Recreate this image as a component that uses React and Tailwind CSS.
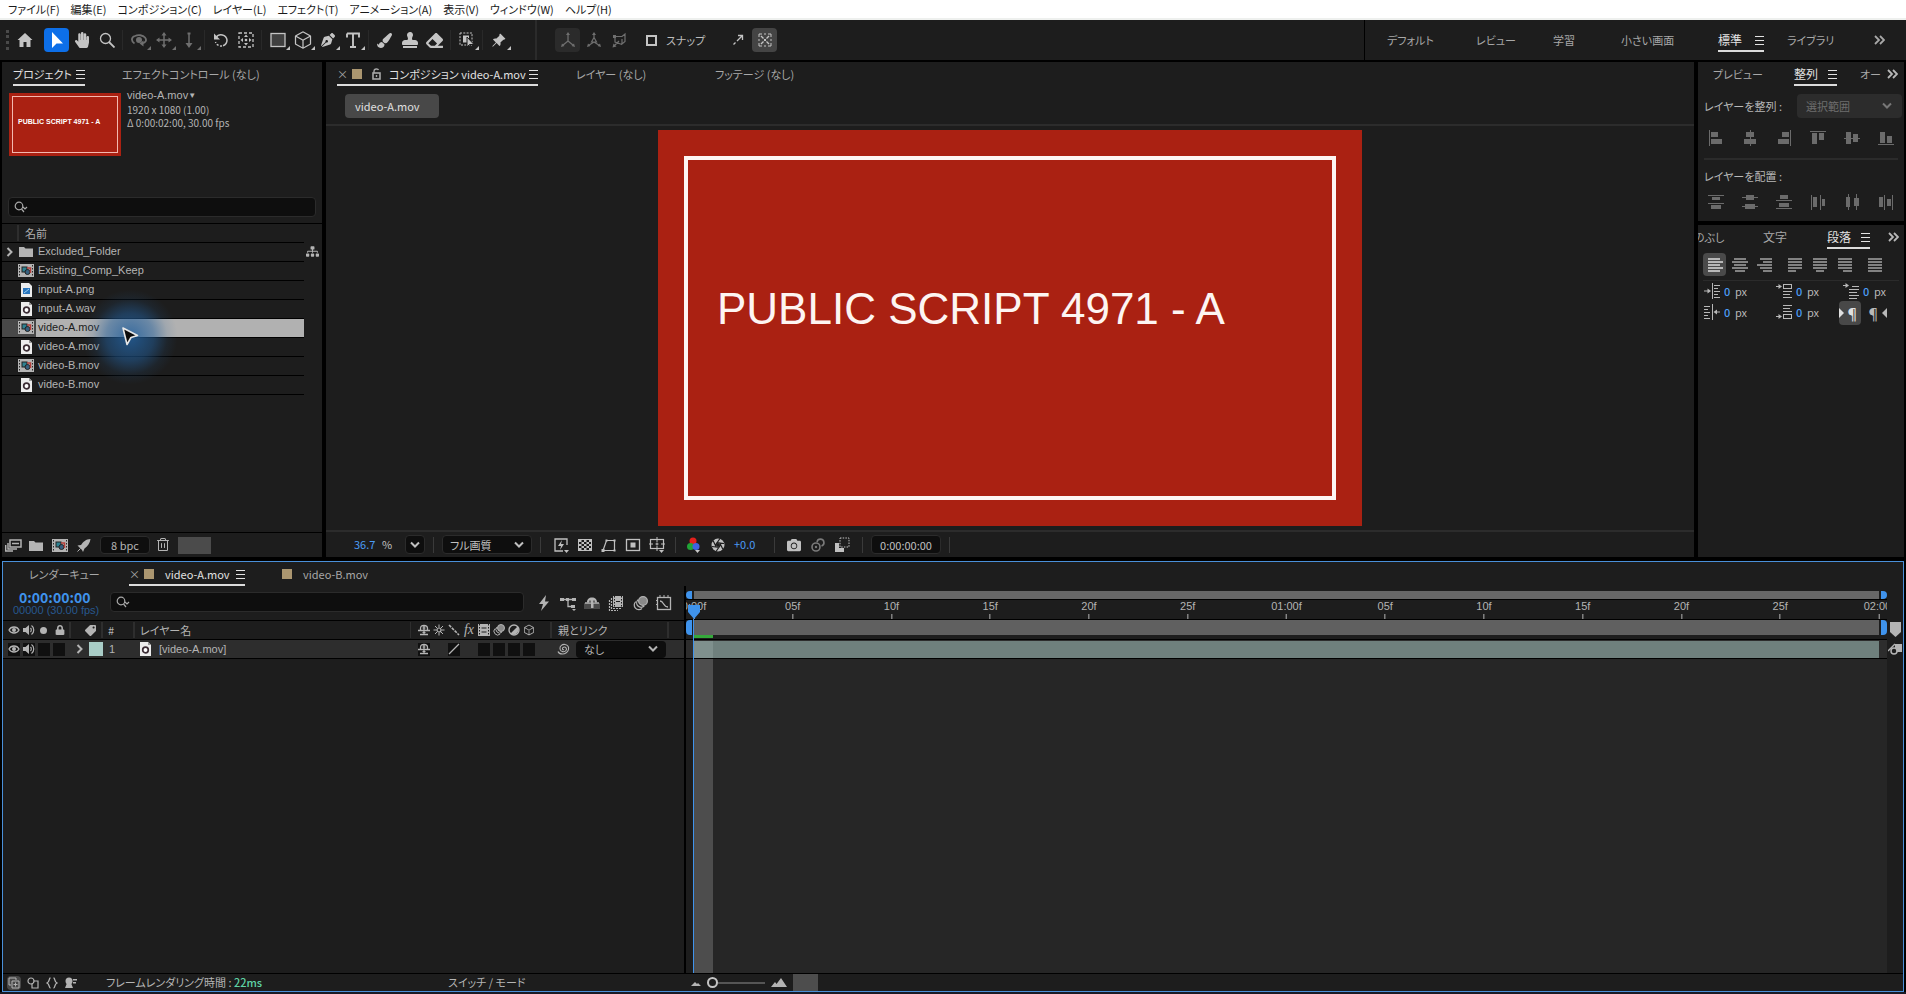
// src/App.jsx
import React, { useState } from 'react'
import clsx from 'clsx'
import { FaHandPaper, FaPenNib, FaPaintBrush, FaStamp, FaEraser, FaLock, FaTag, FaCamera, FaSitemap } from 'react-icons/fa'
import { BsPinAngleFill } from 'react-icons/bs'
import { PiTrash, PiCube } from 'react-icons/pi'

const menus = [
  'ファイル(F)',
  '編集(E)',
  'コンポジション(C)',
  'レイヤー(L)',
  'エフェクト(T)',
  'アニメーション(A)',
  '表示(V)',
  'ウィンドウ(W)',
  'ヘルプ(H)',
]

const projectItems = [
  { id: 1, name: 'Excluded_Folder', type: 'folder' },
  { id: 2, name: 'Existing_Comp_Keep', type: 'comp' },
  { id: 3, name: 'input-A.png', type: 'image' },
  { id: 4, name: 'input-A.wav', type: 'media' },
  { id: 5, name: 'video-A.mov', type: 'comp' },
  { id: 6, name: 'video-A.mov', type: 'media' },
  { id: 7, name: 'video-B.mov', type: 'comp' },
  { id: 8, name: 'video-B.mov', type: 'media' },
]

const rulerLabels = ['0:00f', '05f', '10f', '15f', '20f', '25f', '01:00f', '05f', '10f', '15f', '20f', '25f', '02:00f']

/* ── Icons */
const Svg = ({ size = 16, w, h, className, children }) => (
  <svg
    width={w || size}
    height={h || size}
    viewBox={`0 0 ${w || size} ${h || size}`}
    fill="none"
    stroke="currentColor"
    className={clsx('shrink-0', className)}
    aria-hidden="true"
  >
    {children}
  </svg>
)

const Burger = () => (
  <Svg size={9}>
    <path d="M0 0.500h9M0 4.500h9M0 8.500h9" />
  </Svg>
)

const Chevron = ({ className }) => (
  <Svg w={10} h={8} className={className}>
    <path d="M1 1.500l4 4 4-4" strokeWidth="2" />
  </Svg>
)

const ChevronRight = () => (
  <Svg w={7} h={10}>
    <path d="M1.500 1l4 4-4 4" strokeWidth="2" />
  </Svg>
)

const DoubleChevron = () => (
  <Svg w={11} h={10}>
    <path d="M1 1l4 4-4 4M6 1l4 4-4 4" strokeWidth="1.800" />
  </Svg>
)

const SearchIcon = () => (
  <Svg w={14} h={12}>
    <circle cx="5" cy="5" r="3.800" strokeWidth="1.200" />
    <path d="M7.500 8l2.500 3M9 6l2 2 2-2" strokeWidth="1.200" />
  </Svg>
)

const UnlockIcon = ({ className }) => (
  <Svg w={9} h={12} className={className}>
    <rect x="1" y="5" width="7" height="6" strokeWidth="1.600" />
    <path d="M2 5V3c0-2.500 4-2.500 4.500-1M4.500 7v2" strokeWidth="1.400" />
  </Svg>
)

const HomeIcon = () => (
  <Svg>
    <path d="M8 1L0.500 8h2v7h4V10h3v5h4V8h2z" fill="currentColor" stroke="none" />
  </Svg>
)

const ArrowIcon = () => (
  <Svg>
    <path d="M3 0v16l4.500-4.500H14z" fill="currentColor" stroke="none" />
  </Svg>
)

const ZoomIcon = () => (
  <Svg>
    <circle cx="6.500" cy="6.500" r="5" strokeWidth="1.300" />
    <path d="M10 10l5.500 5.500" strokeWidth="1.800" />
  </Svg>
)

const OrbitIcon = () => (
  <Svg>
    <circle cx="8" cy="8" r="3" fill="currentColor" stroke="none" />
    <path d="M3.500 11.500C0 9.500 0 5 4 4c3-1.500 8-1 10 1.500s1 5-3 6" strokeWidth="1.800" />
    <path d="M12.500 8.500v6l-4-3z" fill="currentColor" stroke="none" />
  </Svg>
)

const PanIcon = () => (
  <Svg>
    <path d="M8 2v12M2 8h12" strokeWidth="1.500" />
    <path d="M8 0l2.500 3.500h-5zM8 16l2.500-3.500h-5zM0 8l3.500 2.500v-5zM16 8l-3.500 2.500v-5z" fill="currentColor" stroke="none" />
  </Svg>
)

const DollyIcon = () => (
  <Svg>
    <path d="M8 1v11" strokeWidth="1.500" />
    <path d="M8 16l3.500-5h-7z" fill="currentColor" stroke="none" />
    <path d="M6.500 1.500h3" strokeWidth="2" />
  </Svg>
)

const RotateIcon = () => (
  <Svg>
    <path d="M3 5.500A6 6 0 0 1 14 8a6 6 0 0 1-4 5.700" strokeWidth="1.500" />
    <path d="M9 14a6 6 0 0 1-6.500-4" strokeWidth="1.500" strokeDasharray="2 1.500" />
    <path d="M1 1.500v6h6z" fill="currentColor" stroke="none" />
  </Svg>
)

const AnchorIcon = () => (
  <Svg>
    <rect x="1" y="1" width="14" height="14" strokeDasharray="3 2" strokeWidth="1.300" />
    <circle cx="8" cy="8" r="1.300" fill="currentColor" stroke="none" />
    <path d="M8 2.500l2 2.500H6zM8 13.500L10 11H6zM2.500 8L5 10V6zM13.500 8L11 10V6z" fill="currentColor" stroke="none" />
  </Svg>
)

const RectIcon = () => (
  <Svg>
    <rect x="1" y="1.500" width="14" height="13" fill="#404040" strokeWidth="1.300" />
  </Svg>
)

const TypeIcon = () => (
  <Svg>
    <path d="M2 1.500h12v4M2 5.500v-4M8 1v14M5 15h6" strokeWidth="1.900" />
  </Svg>
)

const RotoIcon = () => (
  <Svg>
    <rect x="1" y="1" width="12" height="12" strokeDasharray="2 1.300" />
    <rect x="4" y="3.500" width="6" height="7" fill="currentColor" stroke="none" />
    <path d="M8 5v10l2.500-2.500H15z" fill="currentColor" stroke="#1d1d1d" />
  </Svg>
)

const AxisIcon = () => (
  <Svg>
    <path d="M8 2v7M8 9l-5.500 4.500M8 9l5.500 4.500" strokeWidth="1.300" />
    <path d="M8 0l2 3H6zM1 15l1-3.500 2.500 2.500zM15 15l-1-3.500-2.500 2.500z" fill="currentColor" stroke="none" />
  </Svg>
)

const AxisWorldIcon = () => (
  <Svg>
    <path d="M8 2v4M8 10l-5.500 3.500M8 10l5.500 3.500M5.500 10L8 5.500l2.500 4.500z" strokeWidth="1.200" />
    <path d="M8 0l2 3H6zM1 15l1-3.500 2.500 2.500zM15 15l-1-3.500-2.500 2.500z" fill="currentColor" stroke="none" />
  </Svg>
)

const AxisViewIcon = () => (
  <Svg>
    <path d="M3 4.500h7l3-2.500v7.500L10 12V7M3 4.500V10l7 2.500M2 14l5-5" strokeWidth="1.200" />
    <path d="M0.500 15.500l1-4 3 3zM1 3h3v3H1z" fill="currentColor" stroke="none" />
  </Svg>
)

const SnapArrowIcon = () => (
  <Svg size={12}>
    <path d="M5 7l5-5M6 1.500h4.500V6" strokeWidth="1.300" />
    <path d="M1.500 10.500l2-2" strokeWidth="1.300" />
  </Svg>
)

const SnapGridIcon = () => (
  <Svg>
    <path d="M2 5V2h3M11 2h3v3M14 11v3h-3M5 14H2v-3M7 2h2M7 14h2M2 7v2M14 7v2" />
    <path d="M4 4l2.500 2.500M12 4L9.500 6.500M4 12l2.500-2.500M12 12L9.500 9.500" strokeWidth="1.400" />
    <rect x="7" y="7" width="2" height="2" fill="currentColor" stroke="none" />
  </Svg>
)

const FolderIcon = () => (
  <Svg w={14} h={11}>
    <path d="M0 1h5l1.500 1.500H14V11H0z" fill="currentColor" stroke="none" />
  </Svg>
)

const CompIcon = () => (
  <Svg w={16} h={13}>
    <rect width="16" height="13" fill="#b4b4b4" stroke="none" />
    <path d="M1.500 1v11M14.500 1v11" stroke="#2a2a2a" strokeDasharray="1.500 1.500" />
    <rect x="4" y="3" width="5" height="5" fill="#2f8292" stroke="#222" />
    <circle cx="9.500" cy="8" r="2.500" fill="#35607f" stroke="#222" />
    <path d="M9 4h3.500v5" stroke="#b3403c" strokeWidth="1.500" />
  </Svg>
)

const MediaIcon = () => (
  <Svg w={11} h={14}>
    <path d="M0 0h8l3 3v11H0z" fill="#ececec" stroke="none" />
    <path d="M8 0v3h3" fill="#999" stroke="none" />
    <circle cx="5.500" cy="8" r="2.800" fill="#fff" stroke="#3c2d35" strokeWidth="1.700" />
  </Svg>
)

const ImageIcon = () => (
  <Svg w={11} h={14}>
    <path d="M0 0h8l3 3v11H0z" fill="#ececec" stroke="none" />
    <rect x="2" y="5" width="7" height="6" fill="#2b76bd" stroke="none" />
    <path d="M3 10l5-4" stroke="#9ad0f5" />
  </Svg>
)

const itemIcons = {
  folder: <FolderIcon />,
  comp: <CompIcon />,
  image: <ImageIcon />,
  media: <MediaIcon />,
}

const InterpretIcon = () => (
  <Svg w={17} h={13}>
    <rect x="5" y="1" width="11" height="7" strokeWidth="1.500" />
    <path d="M7 4.500h7M3 4v6h9M0.700 6v6H8" strokeWidth="1.400" />
  </Svg>
)

const RocketIcon = () => (
  <Svg w={14} h={13}>
    <path d="M13.500 0C9 0 6 3 4 6L0.500 6.500 3 9l2 2 1 2 1.500-3.500C11 7 13 4 13.500 0z" fill="currentColor" stroke="none" />
    <path d="M3.500 9.500L0.500 12.500" />
  </Svg>
)

const PreviewFastIcon = () => (
  <Svg>
    <path d="M10 14H2V2h12v6" strokeWidth="1.300" />
    <path d="M9 3L5 9h3l-1 4 4-6H8z" fill="currentColor" stroke="none" />
    <path d="M11 13h5l-2.500 3z" fill="currentColor" stroke="none" />
  </Svg>
)

const CheckerIcon = () => (
  <Svg>
    <rect x="1.500" y="2.500" width="13" height="11" />
    <path d="M2 4h12M2 8h12M2 12h12" strokeDasharray="2.500 2.500" strokeWidth="2.200" />
    <path d="M4.500 6h10M4.500 10h10" strokeDasharray="2.500 2.500" strokeWidth="2" />
  </Svg>
)

const MaskIcon = () => (
  <Svg>
    <path d="M2 13.500L5.500 3.500h8v10z" strokeWidth="1.200" />
    <path d="M0.500 12h3v3h-3zM4.500 2.500h2v2h-2zM12.500 2.500h2v2h-2zM12.500 12.500h2v2h-2z" fill="currentColor" stroke="none" />
  </Svg>
)

const RegionIcon = () => (
  <Svg>
    <rect x="1.500" y="2.500" width="13" height="11" strokeWidth="1.300" />
    <rect x="5.500" y="5.500" width="5" height="5" fill="currentColor" stroke="none" />
  </Svg>
)

const GuidesIcon = () => (
  <Svg>
    <rect x="1.500" y="2.500" width="13" height="9" strokeWidth="1.200" />
    <path d="M8 0v5M8 9v5M0 7h4M12 7h4M6.500 7h3M8 5.500v3" />
    <path d="M10 13h5l-2.500 3z" fill="currentColor" stroke="none" />
  </Svg>
)

const ChannelsIcon = () => (
  <Svg>
    <circle cx="7" cy="4" r="3.500" fill="#e3201c" stroke="none" />
    <circle cx="4.500" cy="9.500" r="3.500" fill="#21a336" stroke="none" />
    <circle cx="10" cy="9.500" r="3.500" fill="#3f63e0" stroke="none" />
    <path d="M9 13h5l-2.500 3z" fill="#c8c8c8" stroke="none" />
  </Svg>
)

const ShutterIcon = () => (
  <Svg size={14}>
    <circle cx="7" cy="7" r="6.500" fill="currentColor" stroke="none" />
    <path d="M4.500 7L9 0.500M5.500 4.500l7.500 1M8.500 4.500l3.500 7M9.500 7L5 13.500M8.500 9.500L1 8.500M5.500 9.500L2 2.500" stroke="#1d1d1d" strokeWidth="1.200" />
    <circle cx="7" cy="7" r="2" fill="#1d1d1d" stroke="none" />
  </Svg>
)

const ShowSnapIcon = () => (
  <Svg className="text-[#7a7a7a]">
    <circle cx="6" cy="10" r="4" strokeWidth="1.600" />
    <circle cx="6" cy="10" r="1.200" fill="currentColor" stroke="none" />
    <path d="M7 5a3.500 3.500 0 1 1 4.500 4" strokeWidth="1.600" />
  </Svg>
)

const DraftIcon = () => (
  <Svg>
    <path d="M1 6h4v5h5v4H1z" fill="currentColor" stroke="none" />
    <rect x="6" y="1" width="9" height="9" strokeDasharray="1.500 1.200" />
  </Svg>
)

/* bars given as [x, y, w, h] on a 16px grid */
const Bars = ({ bars }) => (
  <Svg>
    {bars.map((b, i) => (
      <rect key={i} x={b[0]} y={b[1]} width={b[2]} height={b[3]} fill="currentColor" stroke="none" />
    ))}
  </Svg>
)

const alignIcons = [
  { label: '左揃え', bars: [[1, 0, 1, 16], [3, 2, 7, 5], [3, 9, 11, 5]] },
  { label: '水平中央', bars: [[8, 0, 1, 16], [4, 2, 8, 5], [2, 9, 12, 5]] },
  { label: '右揃え', bars: [[14, 0, 1, 16], [6, 2, 7, 5], [2, 9, 11, 5]] },
  { label: '上揃え', bars: [[0, 1, 16, 1], [2, 3, 5, 11], [9, 3, 5, 7]] },
  { label: '垂直中央', bars: [[0, 8, 16, 1], [2, 2, 5, 12], [9, 4, 5, 8]] },
  { label: '下揃え', bars: [[0, 14, 16, 1], [2, 2, 5, 11], [9, 6, 5, 7]] },
]

const distributeIcons = [
  { label: '上に配置', bars: [[0, 1, 16, 1], [4, 3, 8, 3], [0, 9, 16, 1], [3, 11, 10, 4]] },
  { label: '中央に配置', bars: [[0, 3, 16, 1], [4, 1, 8, 5], [0, 12, 16, 1], [3, 10, 10, 5]] },
  { label: '下に配置', bars: [[4, 1, 8, 4], [0, 6, 16, 1], [3, 9, 10, 4], [0, 14, 16, 1]] },
  { label: '左に配置', bars: [[1, 1, 1, 15], [3, 3, 4, 10], [10, 1, 1, 15], [12, 5, 3, 7]] },
  { label: '横中央に配置', bars: [[4, 0, 1, 16], [2, 3, 4, 10], [12, 0, 1, 16], [10, 4, 5, 8]] },
  { label: '右に配置', bars: [[1, 3, 4, 10], [6, 1, 1, 15], [9, 5, 4, 7], [14, 1, 1, 15]] },
]

const ParagraphIcon = ({ rows }) => (
  <Svg>
    {rows.map((r, i) => (
      <rect key={i} x={r[0]} y={1 + i * 3} width={r[1]} height={2} fill="currentColor" stroke="none" />
    ))}
  </Svg>
)

const justify = [
  { label: '左', rows: [[1, 12], [1, 15], [1, 12], [1, 15], [1, 12]] },
  { label: '中央', rows: [[2, 12], [0, 16], [2, 12], [0, 16], [3, 10]] },
  { label: '右', rows: [[3, 12], [6, 9], [0, 15], [3, 12], [6, 9]] },
  { label: '均等左', rows: [[1, 14], [1, 14], [1, 14], [1, 14], [1, 8]] },
  { label: '均等中央', rows: [[1, 14], [1, 14], [1, 14], [1, 14], [4, 8]] },
  { label: '均等右', rows: [[1, 14], [1, 14], [1, 14], [1, 14], [6, 9]] },
  { label: '両端', rows: [[1, 14], [1, 14], [1, 14], [1, 14], [1, 14]] },
]

const IndentLeft = () => (
  <Svg>
    <path d="M8.500 0v16M10 2.500h6M10 5.500h4M10 8.500h6M10 11.500h4M10 14.500h6M0 8h5" />
    <path d="M3.500 5.500L7 8l-3.500 2.500z" fill="currentColor" stroke="none" />
  </Svg>
)

const IndentRight = () => (
  <Svg>
    <path d="M8.500 0v16M0 2.500h6M0 5.500h4M0 8.500h6M0 11.500h4M0 14.500h6M11 8h5" />
    <path d="M13 5.500L9.500 8l3.500 2.500z" fill="currentColor" stroke="none" />
  </Svg>
)

const SpaceBefore = () => (
  <Svg>
    <rect x="7.500" y="1.500" width="8" height="4" />
    <path d="M7 8.500h9M7 11.500h7M7 14.500h9M0 3.500h3" />
    <path d="M2.500 1L6 3.500 2.500 6z" fill="currentColor" stroke="none" />
  </Svg>
)

const SpaceAfter = () => (
  <Svg>
    <rect x="7.500" y="10.500" width="8" height="4" />
    <path d="M7 1.500h9M7 4.500h7M7 7.500h9M0 12.500h3" />
    <path d="M2.500 10L6 12.500 2.500 15z" fill="currentColor" stroke="none" />
  </Svg>
)

const FirstLine = () => (
  <Svg>
    <path d="M9 3.500h7M6 6.500h10M6 9.500h8M6 12.500h10M6 15.500h8M0 2.500h3" />
    <path d="M2.500 0L6 2.500 2.500 5z" fill="currentColor" stroke="none" />
  </Svg>
)

const EyeIcon = () => (
  <Svg w={12} h={10}>
    <path d="M1 5c2-4 8-4 10 0-2 4-8 4-10 0z" strokeWidth="1.300" />
    <circle cx="6" cy="5" r="2" fill="currentColor" stroke="none" />
  </Svg>
)

const SpeakerIcon = () => (
  <Svg w={12} h={12}>
    <path d="M0 4h2.500L6 1v10L2.500 8H0z" fill="currentColor" stroke="none" />
    <path d="M7.500 4c1 1 1 3 0 4M8.500 1.500c3 2 3 7 0 9" strokeWidth="1.200" />
  </Svg>
)

const ShyIcon = () => (
  <Svg w={12} h={12}>
    <path d="M2.500 6V4.500C2.500 2 4 1.500 6 1.500s3.500 0.500 3.500 3V6M0 6.500h12M6 1v10M2 10.500h8" strokeWidth="1.300" />
    <path d="M4.500 4h3M4.500 8.500h3" />
  </Svg>
)

const SunIcon = () => (
  <Svg w={12} h={12}>
    <circle cx="6" cy="6" r="2" strokeWidth="1.200" />
    <path d="M6 0.500v3M6 8.500v3M0.500 6h3M8.500 6h3M2 2l2 2M8 8l2 2M10 2L8 4M4 8l-2 2" />
  </Svg>
)

const BackslashIcon = () => (
  <Svg w={12} h={12}>
    <path d="M1 1l10 10" strokeDasharray="3 1" strokeWidth="1.600" />
  </Svg>
)

const FilmIcon = () => (
  <Svg w={12} h={12}>
    <rect width="12" height="12" fill="currentColor" stroke="none" />
    <path d="M1.500 0v12M10.500 0v12" stroke="#1d1d1d" strokeDasharray="1.500 1.500" />
    <path d="M3.500 4h5M3.500 8h5" stroke="#1d1d1d" />
  </Svg>
)

const BlurIcon = ({ size = 12 }) => (
  <svg width={size} height={size} viewBox="0 0 12 12" fill="none" stroke="currentColor" aria-hidden="true">
    <circle cx="8" cy="4" r="3.500" fill="#8a8a8a" />
    <path d="M4 3a3.500 3.500 0 1 0 5 5M2.200 4.500a3.300 3.300 0 1 0 5 5.500" />
  </svg>
)

const AdjustIcon = () => (
  <Svg w={12} h={12}>
    <circle cx="6" cy="6" r="5" strokeWidth="1.400" />
    <path d="M9.500 2.500a5 5 0 0 1-7 7z" fill="currentColor" stroke="none" />
  </Svg>
)

const SpiralIcon = () => (
  <Svg w={13} h={12}>
    <path d="M7 6.500c-1.500 1-2.500-1.500-0.500-2.300s4 1.300 2.500 3.300-5.500 1.500-6-1.500S5.500 1 8 1.500s4 2.500 3.500 5S8 11 5.500 11 1.500 10 1 8.500" strokeWidth="1.100" />
  </Svg>
)

const FlowIcon = () => (
  <Svg>
    <path d="M1 4.500h14M8 4.500v7h6" strokeWidth="1.300" />
    <path d="M0 3h4v3H0zM6 3h3v3H6zM12 3h4v3h-4zM11 10h4v3h-4z" fill="currentColor" stroke="none" />
    <path d="M12 14h4l-2 2z" fill="currentColor" stroke="none" />
  </Svg>
)

const ShyBigIcon = () => (
  <Svg>
    <path d="M0 8h16v6H0z" fill="#4a4a4a" stroke="none" />
    <path d="M3 7.500C3 4 5 2.500 8 2.500s5 1.500 5 5zM7 7h2.500v6H7z" fill="currentColor" stroke="none" />
    <path d="M1 8h14" strokeWidth="1.500" />
    <path d="M6 5.500v2M10 5.500v2" stroke="#1d1d1d" />
  </Svg>
)

const FrameBlendIcon = () => (
  <Svg>
    <rect x="5" y="1" width="10" height="11" fill="currentColor" stroke="none" />
    <path d="M6.500 1v11M13.500 1v11" stroke="#1d1d1d" strokeDasharray="1.500 1.500" />
    <path d="M8 6.500h4" stroke="#1d1d1d" />
    <path d="M3.500 3v10.500H13M1.500 5v10.500H10" strokeDasharray="2 1" strokeWidth="1.200" />
  </Svg>
)

const GraphIcon = () => (
  <Svg>
    <rect x="1.500" y="2.500" width="13" height="12" strokeWidth="1.300" />
    <path d="M4 6c4 0 3 6 8 6" strokeWidth="1.300" />
    <path d="M4 0v3M8 0v3M12 0v3M0 5.500h2M0 9.500h2" />
  </Svg>
)

const BoltIcon = () => (
  <Svg>
    <path d="M10 0L3 9h4l-2 7 8-9.500H9z" fill="currentColor" stroke="none" />
  </Svg>
)

/* ── Small shared parts */
const ToolButton = ({ label, active, dim, corner, onClick, children }) => (
  <button
    type="button"
    aria-label={label}
    onClick={onClick}
    className={clsx(
      'relative flex h-6 w-[25px] items-center justify-center rounded',
      active ? 'bg-[#0d6fe8] text-white' : dim ? 'text-[#6f6f6f]' : 'text-[#c4c4c4]',
    )}
  >
    {children}
    {corner && <span className="absolute bottom-[2px] right-0 border-b-4 border-l-4 border-b-current border-l-transparent" />}
  </button>
)

const ToolSep = () => <span className="mx-[3px] h-5 w-px bg-[#292929]" />

const Sep = ({ className }) => <span className={clsx('h-4 w-px bg-[#3a3a3a]', className)} />

const Tab = ({ active, className, children }) => (
  <button
    type="button"
    className={clsx(
      'flex h-6 shrink-0 items-center whitespace-nowrap border-b-2 pt-[2px]',
      active ? 'border-[#dcdcdc] text-[#e2e2e2]' : 'border-transparent text-[#a8a8a8]',
      className,
    )}
  >
    {children}
  </button>
)

const IconButton = ({ label, className, children }) => (
  <button type="button" aria-label={label} className={clsx('flex h-5 items-center justify-center', className || 'w-6')}>
    {children}
  </button>
)

const SearchBox = ({ label, className }) => (
  <div className={clsx('relative', className)}>
    <span className="absolute left-[6px] top-1/2 -translate-y-1/2 text-[#a9a9a9]">
      <SearchIcon />
    </span>
    <input
      type="text"
      aria-label={label}
      className="block h-5 w-full rounded border border-[#2b2b2b] bg-[#0e0e0e] pl-6 text-[11px] focus:outline-none"
    />
  </div>
)

const Select = ({ label, value, className, selectClass }) => (
  <div className={clsx('relative', className)}>
    <select aria-label={label} className={clsx('block w-full appearance-none rounded border pl-[7px] text-[11px]', selectClass)}>
      <option>{value}</option>
    </select>
    <Chevron className="pointer-events-none absolute right-2 top-1/2 -translate-y-1/2" />
  </div>
)

const Swatch = () => <span className="h-[10px] w-[10px] shrink-0 bg-[#ab9670]" />

/* ── Menu bar */
const MenuBar = () => (
  <nav className="flex h-5 items-center gap-[11px] border-b-2 border-[#eef0ee] bg-white pl-2 text-[11px] leading-4 text-[#1a1a1a]">
    {menus.map((m) => (
      <button key={m} type="button" className="whitespace-nowrap">
        {m}
      </button>
    ))}
  </nav>
)

/* ── Toolbar */
const Toolbar = () => {
  const [tool, setTool] = useState('select')
  const [snap, setSnap] = useState(false)

  const groups = [
    [
      { key: 'select', icon: <ArrowIcon /> },
      { key: 'hand', icon: <FaHandPaper size={16} /> },
      { key: 'zoom', icon: <ZoomIcon /> },
    ],
    [
      { key: 'orbit', icon: <OrbitIcon />, dim: true, corner: true },
      { key: 'pan', icon: <PanIcon />, dim: true, corner: true },
      { key: 'dolly', icon: <DollyIcon />, dim: true, corner: true },
    ],
    [
      { key: 'rotate', icon: <RotateIcon /> },
      { key: 'anchor', icon: <AnchorIcon /> },
    ],
    [
      { key: 'rect', icon: <RectIcon />, corner: true },
      { key: 'cube', icon: <PiCube size={20} />, corner: true },
      { key: 'pen', icon: <FaPenNib size={14} />, corner: true },
      { key: 'type', icon: <TypeIcon />, corner: true },
    ],
    [
      { key: 'brush', icon: <FaPaintBrush size={15} /> },
      { key: 'stamp', icon: <FaStamp size={16} /> },
      { key: 'eraser', icon: <FaEraser size={17} /> },
    ],
    [{ key: 'roto', icon: <RotoIcon />, corner: true }],
    [{ key: 'pin', icon: <BsPinAngleFill size={15} />, corner: true }],
  ]

  return (
    <header className="flex h-10 items-center bg-[#1d1d1d] text-[11px] text-[#a8a8a8]">
      <div className="flex flex-1 items-center self-stretch">
        <span className="ml-[6px] h-5 border-l-[3px] border-dotted border-[#4a4a4a]" />
        <span className="ml-[3px]">
          <ToolButton label="ホーム">
            <HomeIcon />
          </ToolButton>
        </span>
        <span className="ml-[7px] flex items-center">
          {groups.map((g, i) => (
            <React.Fragment key={i}>
              {i > 0 && <ToolSep />}
              {g.map((t) => (
                <ToolButton
                  key={t.key}
                  label={t.key}
                  active={tool === t.key}
                  dim={t.dim}
                  corner={t.corner}
                  onClick={() => setTool(t.key)}
                >
                  {t.icon}
                </ToolButton>
              ))}
            </React.Fragment>
          ))}
        </span>
        <span className="ml-6 w-[2px] self-stretch bg-[#2b2b2b]" />
        <div className="ml-[18px] flex items-center gap-[1px]">
          <span className="rounded bg-[#2b2b2b]">
            <ToolButton label="ローカル軸" dim>
              <AxisIcon />
            </ToolButton>
          </span>
          <ToolButton label="ワールド軸" dim>
            <AxisWorldIcon />
          </ToolButton>
          <ToolButton label="ビュー軸" dim>
            <AxisViewIcon />
          </ToolButton>
        </div>
        <label className="ml-[14px] flex items-center gap-[9px] whitespace-nowrap text-[#bdbdbd]">
          <input
            type="checkbox"
            checked={snap}
            onChange={(e) => setSnap(e.target.checked)}
            className="h-[11px] w-[11px] appearance-none border-2 border-[#c4c4c4] checked:bg-[#c4c4c4]"
          />
          スナップ
        </label>
        <div className="ml-5 flex items-center gap-[2px]">
          <ToolButton label="スナップ延長">
            <SnapArrowIcon />
          </ToolButton>
          <span className="rounded bg-[#444]">
            <ToolButton label="スナップ表示">
              <SnapGridIcon />
            </ToolButton>
          </span>
        </div>
      </div>

      {/* ── Workspaces */}
      <div className="flex w-[542px] items-center self-stretch border-l border-black pl-[22px]">
        <button type="button" className="w-[89px] text-left">デフォルト</button>
        <button type="button" className="w-[77px] text-left">レビュー</button>
        <button type="button" className="w-[68px] text-left">学習</button>
        <button type="button" className="w-[97px] text-left text-[11px]">小さい画面</button>
        <Tab active className="w-[46px] justify-between text-xs">
          標準 <Burger />
        </Tab>
        <button type="button" className="ml-[23px] w-[84px] text-left">ライブラリ</button>
        <IconButton label="その他" className="w-4">
          <DoubleChevron />
        </IconButton>
      </div>
    </header>
  )
}

/* ── Project panel */
const ProjectPanel = () => {
  const [selected, setSelected] = useState(5)

  return (
    <section className="relative flex w-80 shrink-0 flex-col bg-[#1d1d1d]">
      <div className="flex px-[11px] text-[11px]">
        <Tab active className="w-[72px] justify-between">
          プロジェクト <Burger />
        </Tab>
        <Tab className="ml-[37px]">エフェクトコントロール (なし)</Tab>
      </div>

      <div className="flex h-[111px] gap-[6px] pl-[7px] pt-[7px]">
        <div className="h-[63px] w-28 bg-[#aa2112] p-[3px]">
          <div className="flex h-full items-center border border-[#f3b9b0] pb-1 pl-[5px] font-['Liberation_Sans',sans-serif] text-[7px] font-bold whitespace-nowrap text-white">
            PUBLIC SCRIPT 4971 - A
          </div>
        </div>
        <div className="-mt-1 text-[10px] leading-[13px] text-[#b4b4b4]">
          <p className="flex items-center font-['Liberation_Sans',sans-serif] text-[11px] leading-[13px]">
            video-A.mov<span className="text-[8px]">▼</span>
          </p>
          <p className="mt-px">1920 x 1080 (1.00)</p>
          <p>Δ 0:00:02:00, 30.00 fps</p>
        </div>
      </div>

      <SearchBox label="プロジェクトを検索" className="mx-[6px] mb-[6px]" />

      <div className="relative flex-1 border-t border-black">
        <table className="w-full table-fixed border-collapse text-left">
          <colgroup>
            <col className="w-[34px]" />
            <col />
            <col className="w-[18px]" />
          </colgroup>
          <thead>
            <tr className="text-[11px] text-[#b0b0b0]">
              <th colSpan={2} className="h-[18px] border-b border-black p-0 font-normal leading-4">
                <div className="ml-[15px] border-l-2 border-[#2e2e2e] pl-[6px]">名前</div>
              </th>
              <th className="p-0" />
            </tr>
          </thead>
          <tbody>
            {projectItems.map((it) => (
              <tr
                key={it.id}
                onClick={() => setSelected(it.id)}
                className="font-['Liberation_Sans',sans-serif] text-[11px] leading-4"
              >
                <td className={clsx('h-[19px] border-b border-black p-0', selected === it.id && 'bg-[#484848]')}>
                  <div className="flex h-4 items-center text-[#b4b4b4]">
                    <span className="flex w-[15px] justify-center">{it.type === 'folder' && <ChevronRight />}</span>
                    <span className="flex w-[18px] justify-center">{itemIcons[it.type]}</span>
                  </div>
                </td>
                <td
                  className={clsx(
                    'border-b border-black p-0 pb-[2px] pl-[2px]',
                    selected === it.id ? 'bg-[#b1b1b1] text-[#1b1b1b]' : 'text-[#b4b4b4]',
                  )}
                >
                  {it.name}
                </td>
                <td className="p-0 text-[#b4b4b4]">{it.type === 'folder' && <FaSitemap size={13} className="ml-[2px]" />}</td>
              </tr>
            ))}
          </tbody>
        </table>

        {/* click highlight and pointer */}
        <div className="pointer-events-none absolute left-[80px] top-[65px] h-24 w-24 bg-[radial-gradient(circle,rgba(35,95,155,0.85)_0%,rgba(35,95,155,0.5)_35%,rgba(35,95,155,0.12)_55%,transparent_70%)]" />
        <svg width="18" height="21" viewBox="0 0 18 21" className="pointer-events-none absolute left-[119px] top-[102px]" aria-hidden="true">
          <path d="M2 2l14.500 7.500-6.500 2-4 7z" fill="#0c0c0c" stroke="#e8e8e8" strokeWidth="1.600" strokeLinejoin="round" />
        </svg>
      </div>

      <div className="flex h-[25px] items-center border-t border-black text-[11px] text-[#b4b4b4]">
        <IconButton label="フッテージを変換" className="w-[22px]">
          <InterpretIcon />
        </IconButton>
        <IconButton label="新規フォルダー">
          <FolderIcon />
        </IconButton>
        <IconButton label="新規コンポジション">
          <CompIcon />
        </IconButton>
        <IconButton label="プロジェクト設定">
          <RocketIcon />
        </IconButton>
        <button type="button" className="ml-1 h-[18px] w-[50px] rounded border border-[#2b2b2b] bg-[#0e0e0e] leading-4">
          8 bpc
        </button>
        <IconButton label="削除" className="w-[26px]">
          <PiTrash size={16} />
        </IconButton>
        <span className="ml-[2px] h-[17px] w-[33px] bg-[#4b4b4b]" />
      </div>
    </section>
  )
}

/* ── Composition viewer */
const Viewer = () => (
  <section className="flex min-w-0 flex-1 flex-col bg-[#1d1d1d] text-[11px]">
    <div className="flex pl-[11px]">
      <Tab active className="w-[201px]">
        <span className="w-[15px] shrink-0 text-left text-[#a8a8a8]">×</span>
        <Swatch />
        <UnlockIcon className="ml-[10px] mr-2 text-[#a8a8a8]" />
        <span className="flex-1 text-left">コンポジション video-A.mov</span>
        <Burger />
      </Tab>
      <Tab className="ml-[38px] w-[139px]">レイヤー (なし)</Tab>
      <Tab>フッテージ (なし)</Tab>
    </div>

    <div className="flex h-10 items-start border-b-2 border-[#2c2c2c] pl-[19px] pt-2">
      <button type="button" className="h-6 w-[94px] rounded bg-[#484848] pl-[10px] text-left text-[#e0e0e0]">
        video-A.mov
      </button>
    </div>

    <div className="flex flex-1 items-center justify-center">
      <div className="aspect-video w-[704px] bg-[#aa2112] p-[26px]">
        <div className="flex h-full items-center border-4 border-[#fdf5f2] pb-[38px] pl-[29px]">
          <p className="font-['Liberation_Sans',sans-serif] text-[44px] leading-none whitespace-nowrap text-[#fdf5f2]">
            PUBLIC SCRIPT 4971 - A
          </p>
        </div>
      </div>
    </div>

    <div className="flex h-[27px] items-center border-t-2 border-[#2c2c2c] pl-7 text-[#c0c0c0]">
      <button type="button" className="w-7 text-left text-[#4b9cf5]">36.7</button>
      <span className="w-[23px]">%</span>
      <button type="button" aria-label="拡大率" className="flex h-[19px] w-5 items-center justify-center rounded border border-[#2b2b2b] bg-[#0e0e0e]">
        <Chevron />
      </button>
      <Sep className="mx-2" />
      <Select label="解像度" value="フル画質" className="w-[90px]" selectClass="h-[19px] border-[#2b2b2b] bg-[#0e0e0e] leading-4" />
      <Sep className="mx-2" />
      <IconButton label="高速プレビュー"><PreviewFastIcon /></IconButton>
      <IconButton label="透明グリッド"><CheckerIcon /></IconButton>
      <IconButton label="マスク表示"><MaskIcon /></IconButton>
      <IconButton label="目標範囲"><RegionIcon /></IconButton>
      <IconButton label="ガイド"><GuidesIcon /></IconButton>
      <Sep className="mx-[6px]" />
      <IconButton label="チャンネル"><ChannelsIcon /></IconButton>
      <IconButton label="露出をリセット"><ShutterIcon /></IconButton>
      <button type="button" className="ml-1 w-10 text-left text-[#4b9cf5]">+0.0</button>
      <Sep className="mr-[7px]" />
      <IconButton label="スナップショット"><FaCamera size={14} /></IconButton>
      <IconButton label="スナップショットを表示"><ShowSnapIcon /></IconButton>
      <IconButton label="ドラフト3D"><DraftIcon /></IconButton>
      <Sep className="mx-2" />
      <button type="button" className="h-[19px] w-[70px] rounded border border-[#2b2b2b] bg-[#0e0e0e] leading-4">
        0:00:00:00
      </button>
      <Sep className="ml-2" />
    </div>
  </section>
)

/* ── Align + Paragraph panels */
const Field = ({ icon, label }) => (
  <label className="flex items-center gap-1">
    {icon}
    <input
      type="text"
      aria-label={label}
      defaultValue="0"
      className="w-[7px] border-0 bg-transparent p-0 font-medium text-[#4b9cf5] focus:outline-none"
    />
    px
  </label>
)

const SidePanels = () => {
  const [align, setAlign] = useState('左')

  return (
    <aside className="flex w-[206px] shrink-0 flex-col gap-1 text-[11px] text-[#b8b8b8]">
      <section className="h-[159px] bg-[#1d1d1d]">
        <div className="flex items-center pl-[15px]">
          <Tab className="w-[81px]">プレビュー</Tab>
          <Tab active className="w-[43px] justify-between text-xs">整列 <Burger /></Tab>
          <Tab className="ml-[23px] w-[21px] overflow-hidden">オーディオ</Tab>
          <IconButton label="その他" className="ml-[5px] w-3"><DoubleChevron /></IconButton>
        </div>
        <div className="flex items-center justify-between pl-[6px] pr-[2px] pt-2">
          <label htmlFor="align-to" className="whitespace-nowrap">レイヤーを整列 :</label>
          <div className="relative w-[105px] text-[#777]">
            <select id="align-to" disabled className="block h-6 w-full appearance-none rounded bg-[#2c2c2c] pl-[9px] text-[11px] text-[#6e6e6e] opacity-100">
              <option>選択範囲</option>
            </select>
            <Chevron className="pointer-events-none absolute right-[10px] top-1/2 -translate-y-1/2" />
          </div>
        </div>
        <div className="mt-[10px] flex items-center justify-between px-[10px] text-[#6b6b6b]">
          {alignIcons.map((a) => (
            <IconButton key={a.label} label={a.label} className="w-4"><Bars bars={a.bars} /></IconButton>
          ))}
        </div>
        <div className="mx-[6px] mt-[10px] border-t-2 border-[#2b2b2b] pt-2 leading-4">レイヤーを配置 :</div>
        <div className="mt-2 flex items-center justify-between px-[10px] text-[#6b6b6b]">
          {distributeIcons.map((a) => (
            <IconButton key={a.label} label={a.label} className="w-4"><Bars bars={a.bars} /></IconButton>
          ))}
        </div>
      </section>

      <section className="flex-1 bg-[#1d1d1d]">
        <div className="flex items-center">
          <Tab className="w-[65px] justify-start overflow-hidden">
            <span className="-ml-1">のぶし</span>
          </Tab>
          <Tab className="w-16 text-xs">文字</Tab>
          <Tab active className="w-[43px] justify-between text-xs">段落 <Burger /></Tab>
          <IconButton label="その他" className="ml-[17px] w-3"><DoubleChevron /></IconButton>
        </div>
        <div className="mx-[5px] mt-1 flex items-center gap-[2px] border-b border-[#2b2b2b] pb-1">
          {justify.map((j) => (
            <button
              key={j.label}
              type="button"
              aria-label={j.label}
              onClick={() => setAlign(j.label)}
              className={clsx(
                'flex h-[23px] w-[23px] items-center justify-center rounded',
                align === j.label ? 'bg-[#4a4a4a] text-[#b8b8b8]' : 'text-[#828282]',
                (j.label === '均等左' || j.label === '両端') && 'ml-[5px]',
              )}
            >
              <ParagraphIcon rows={j.rows} />
            </button>
          ))}
        </div>
        <div className="mt-[2px] grid grid-cols-[72px_67px_1fr] pl-[6px] leading-4">
          <Field icon={<IndentLeft />} label="左インデント" />
          <Field icon={<SpaceBefore />} label="段落前のアキ" />
          <Field icon={<FirstLine />} label="最初の行のインデント" />
          <Field icon={<IndentRight />} label="右インデント" />
          <Field icon={<SpaceAfter />} label="段落後のアキ" />
          <div className="-ml-1 flex items-center gap-1 pt-[2px]">
            <button type="button" className="flex h-6 w-[22px] items-center justify-center rounded bg-[#484848] text-base leading-4 text-[#e0e0e0]">
              <Svg w={5} h={10}><path d="M0 0l5 5-5 5z" fill="currentColor" stroke="none" /></Svg>
              ¶
            </button>
            <button type="button" className="flex h-6 w-[22px] items-center justify-center text-base leading-4">
              ¶
              <Svg w={5} h={10}><path d="M5 0L0 5l5 5z" fill="currentColor" stroke="none" /></Svg>
            </button>
          </div>
        </div>
      </section>
    </aside>
  )
}

/* ── Timeline */
const Box = ({ children }) => <span className="flex h-[13px] w-3 items-center justify-center bg-[#101010]">{children}</span>

const LayerTable = () => (
  <table className="w-full table-fixed border-collapse text-left text-[11px] text-[#b4b4b4]">
    <colgroup>
      <col className="w-[68px]" />
      <col className="w-8" />
      <col className="w-8" />
      <col className="w-[276px]" />
      <col className="w-[141px]" />
      <col className="w-[117px]" />
      <col />
    </colgroup>
    <thead>
      <tr className="leading-4">
        <th className="h-[19px] border-y border-black p-0 font-normal">
          <div className="flex h-4 items-center gap-[3px] border-r-2 border-[#2e2e2e] pl-[5px]">
            <EyeIcon />
            <SpeakerIcon />
            <span className="mx-[2px] h-[7px] w-[7px] rounded-full bg-current" />
            <FaLock size={10} className="ml-[3px]" />
          </div>
        </th>
        <th className="border-y border-black p-0">
          <div className="flex h-4 items-center justify-center border-r-2 border-[#2e2e2e] pl-2">
            <FaTag size={11} className="rotate-90" />
          </div>
        </th>
        <th className="border-y border-black p-0 font-normal">
          <div className="border-r-2 border-[#2e2e2e] pl-[5px]">#</div>
        </th>
        <th className="border-y border-black p-0 font-normal">
          <div className="border-r border-[#2e2e2e] pl-[5px]">レイヤー名</div>
        </th>
        <th className="border-y border-black p-0 font-normal">
          <div className="flex h-4 items-center gap-[3px] border-r-2 border-[#2e2e2e] pl-[7px]">
            <ShyIcon />
            <SunIcon />
            <BackslashIcon />
            <i className="w-3 text-center font-['Liberation_Serif',serif] text-sm leading-4">fx</i>
            <FilmIcon />
            <BlurIcon />
            <AdjustIcon />
            <PiCube size={12} />
          </div>
        </th>
        <th className="border-y border-black p-0 font-normal">
          <div className="border-r-2 border-[#2e2e2e] pl-[6px]">親とリンク</div>
        </th>
        <th className="border-y border-black p-0" />
      </tr>
    </thead>
    <tbody>
      <tr className="bg-[#2d2d2d] leading-4">
        <td className="h-[19px] border-b border-black p-0">
          <div className="flex h-4 items-center gap-[3px] pl-[5px]">
            <Box><EyeIcon /></Box>
            <Box><SpeakerIcon /></Box>
            <Box />
            <Box />
          </div>
        </td>
        <td className="border-b border-black p-0">
          <div className="flex items-center justify-end gap-[6px]">
            <ChevronRight />
            <span className="h-[14px] w-[14px] bg-[#a9cdc7]" />
          </div>
        </td>
        <td className="border-b border-black p-0 pl-[6px] font-['Liberation_Sans',sans-serif]">1</td>
        <td className="border-b border-black p-0">
          <div className="flex items-center gap-2 pl-[5px] font-['Liberation_Sans',sans-serif]">
            <MediaIcon /> [video-A.mov]
          </div>
        </td>
        <td className="border-b border-black p-0">
          <div className="flex items-center gap-[3px] pl-[7px]">
            <Box><ShyIcon /></Box>
            <span className="w-3" />
            <Box>
              <Svg size={12}><path d="M1 11L11 1" strokeWidth="1.300" /></Svg>
            </Box>
            <span className="w-3" />
            <Box />
            <Box />
            <Box />
            <Box />
          </div>
        </td>
        <td className="border-b border-black p-0">
          <div className="flex items-center gap-[6px] pl-[5px]">
            <SpiralIcon />
            <Select label="親とリンク" value="なし" className="w-[90px]" selectClass="h-[17px] border-transparent bg-[#0e0e0e] leading-[14px]" />
          </div>
        </td>
        <td className="border-b border-black p-0" />
      </tr>
    </tbody>
  </table>
)

const Tracks = () => (
  <div className="flex min-w-0 flex-1 bg-[#1d1d1d]">
    <div className="relative min-w-0 flex-1 overflow-hidden">
      <div className="relative mx-2 flex h-full flex-col pt-[5px]">
        {/* navigator */}
        <div className="-mx-2 flex h-2 items-stretch">
          <span className="w-[6px] rounded-l-full bg-[#3f93ec]" />
          <span className="mx-[2px] flex-1 bg-[#676767]" />
          <span className="w-[6px] rounded-r-full bg-[#3f93ec]" />
        </div>
        {/* ruler */}
        <div className="relative -mx-2 h-[21px] border-y border-black px-2">
          <div className="relative h-full font-['Liberation_Sans',sans-serif] text-[11px] leading-3 text-[#b4b4b4]">
            {rulerLabels.map((l, i) => (
              <span
                key={i}
                className="absolute top-0 flex h-full -translate-x-1/2 flex-col items-center justify-between"
                style={{ left: `${(i / (rulerLabels.length - 1)) * 100}%` }}
              >
                {l}
                <span className="h-[5px] w-px bg-[#b4b4b4]" />
              </span>
            ))}
          </div>
        </div>
        {/* work area */}
        <div className="-mx-2 flex h-[15px] items-stretch">
          <span className="w-[6px] rounded-l bg-[#3f93ec]" />
          <span className="mx-[2px] flex-1 bg-[#606060]" />
          <span className="w-[6px] rounded-r bg-[#3f93ec]" />
        </div>
        <div className="-mx-2 h-[5px] border-b border-black px-2">
          <div className="h-[3px] w-[19px] bg-[#35a83b]" />
        </div>
        {/* layer bar */}
        <div className="-mx-2 h-[19px] border-b border-black bg-[#2d2d2d] px-2 pt-[1px]">
          <div className="flex h-[17px] bg-[#6f807d]">
            <span className="w-[19px] bg-[#7f908d]" />
          </div>
        </div>
        <div className="-mr-2 flex flex-1 bg-[#262626]">
          <span className="w-[19px] bg-[#4d4d4d]" />
        </div>

        {/* playhead */}
        <div className="absolute -left-px bottom-0 top-[33px] w-px bg-[#3f93ec]" />
        <svg width="12" height="14" viewBox="0 0 12 14" className="absolute -left-[6px] top-[19px]" aria-hidden="true">
          <path d="M0 0h12v7l-6 7-6-7z" fill="#3f93ec" />
        </svg>
      </div>
    </div>
    <div className="flex w-4 flex-col items-center gap-[6px] pt-9 text-[#b4b4b4]">
      <Svg w={13} h={15}>
        <path d="M1 0h11v10l-5.500 5L1 10z" fill="currentColor" stroke="none" />
      </Svg>
      <Svg w={14} h={13}>
        <path d="M7 1h7v8H7z" fill="currentColor" stroke="none" />
        <circle cx="6" cy="8" r="3" fill="#1d1d1d" strokeWidth="1.500" />
        <path d="M0 8l7-7" strokeWidth="1.500" />
      </Svg>
    </div>
  </div>
)

const Timeline = () => (
  <section className="flex min-h-0 flex-1 flex-col border border-[#4a90d9] bg-[#1d1d1d] text-[11px] text-[#b4b4b4]">
    <div className="flex h-6 shrink-0 pl-[26px]">
      <Tab className="w-[100px]">レンダーキュー</Tab>
      <Tab active className="w-[116px]">
        <span className="w-[15px] text-left text-[#a8a8a8]">×</span>
        <Swatch />
        <span className="ml-[11px] flex-1 text-left">video-A.mov</span>
        <Burger />
      </Tab>
      <Tab className="ml-[37px] gap-[11px]">
        <Swatch /> video-B.mov
      </Tab>
    </div>

    <div className="flex min-h-0 flex-1">
      <div className="flex w-[683px] shrink-0 flex-col border-r-2 border-black">
        <div className="flex h-[34px] items-start">
          <div className="w-[107px] pl-[10px] pt-1">
            <button type="button" className="block pl-[6px] text-sm leading-[14px] font-bold text-[#3f93ec]">0:00:00:00</button>
            <p className="font-['Liberation_Sans',sans-serif] text-[11px] leading-3 whitespace-nowrap text-[#27588f]">00000 (30.00 fps)</p>
          </div>
          <SearchBox label="レイヤーを検索" className="mt-[6px] w-[414px]" />
          <div className="ml-2 mt-[7px] flex">
            <IconButton label="ドラフト"><BoltIcon /></IconButton>
            <IconButton label="フローチャート"><FlowIcon /></IconButton>
            <IconButton label="シャイ"><ShyBigIcon /></IconButton>
            <IconButton label="フレームブレンド"><FrameBlendIcon /></IconButton>
            <IconButton label="モーションブラー"><BlurIcon size={15} /></IconButton>
            <IconButton label="グラフエディター"><GraphIcon /></IconButton>
          </div>
        </div>
        <LayerTable />
      </div>
      <Tracks />
    </div>

    {/* ── Status bar */}
    <footer className="flex h-[18px] shrink-0 items-center border-t border-black">
      <div className="flex w-[683px] items-center">
        <div className="flex w-[103px] items-center gap-[5px] pl-1">
          <span className="rounded bg-[#484848] p-px">
            <Svg size={12}><path d="M1 1h7v2M1 1v7h2M4 4h7v7H4zM7.500 5.500v4M5.500 7.500h4" /></Svg>
          </span>
          <IconButton label="転送制御" className="w-[14px]">
            <Svg size={12}><circle cx="4" cy="4" r="3" strokeWidth="1.200" /><path d="M7 4h4v7H5V7" strokeWidth="1.200" /></Svg>
          </IconButton>
          <IconButton label="イン・アウト" className="w-[14px]">
            <Svg size={12}><path d="M4.500 1C2.500 1 4 5 1 6c3 1 1.500 5 3.500 5M7.500 1c2 0 0.500 4 3.500 5-3 1-1.500 5-3.500 5" strokeWidth="1.300" /></Svg>
          </IconButton>
          <IconButton label="レンダリング時間" className="w-[14px]">
            <Svg size={12}>
              <circle cx="4" cy="4" r="3.500" fill="currentColor" stroke="none" />
              <path d="M0 11l2-5h4l2 5zM8 2h4v1.500H8zM8 5h3v1.500H8z" fill="currentColor" stroke="none" />
            </Svg>
          </IconButton>
        </div>
        <p className="w-[342px] whitespace-nowrap">
          フレームレンダリング時間 : <span className="font-medium text-[#5fd3a6]">22ms</span>
        </p>
        <button type="button" className="whitespace-nowrap">スイッチ / モード</button>
      </div>
      <div className="flex items-center gap-[6px] self-stretch pl-[5px] text-[#b4b4b4]">
        <Svg w={10} h={6}><path d="M0 6l4-4 2 2 1-1 3 3z" fill="currentColor" stroke="none" /></Svg>
        <input type="range" min="0" max="100" defaultValue="0" aria-label="ズーム" className="h-[2px] w-[58px] appearance-none bg-[#555] [&::-webkit-slider-thumb]:h-[11px] [&::-webkit-slider-thumb]:w-[11px] [&::-webkit-slider-thumb]:appearance-none [&::-webkit-slider-thumb]:rounded-full [&::-webkit-slider-thumb]:border-2 [&::-webkit-slider-thumb]:border-[#c4c4c4] [&::-webkit-slider-thumb]:bg-[#1d1d1d]" />
        <Svg w={16} h={10}><path d="M0 9l4-5 1.500 2L10 0l6 9z" fill="currentColor" stroke="none" /></Svg>
        <span className="w-[25px] self-stretch bg-[#4d4d4d]" />
      </div>
    </footer>
  </section>
)

const App = () => (
  <div className="flex h-screen flex-col overflow-hidden bg-black font-['Noto_Sans_CJK_JP',sans-serif] [font-feature-settings:'palt']">
    <MenuBar />
    <Toolbar />
    <main className="flex min-h-0 flex-1 flex-col gap-1 border-b-2 border-[#1a1a24] px-[2px] pt-[2px]">
      <div className="flex h-[495px] shrink-0 gap-1">
        <ProjectPanel />
        <Viewer />
        <SidePanels />
      </div>
      <Timeline />
    </main>
  </div>
)

export default App
